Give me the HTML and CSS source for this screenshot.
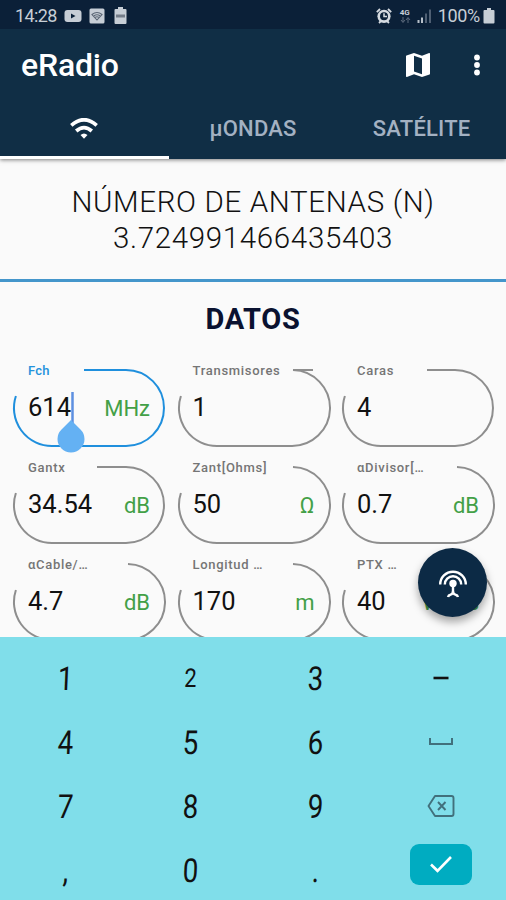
FILE: index.html
```
<!DOCTYPE html>
<html lang="es">
<head>
    <meta charset="UTF-8">
    <meta name="viewport" content="width=device-width, initial-scale=1.0">
    <title>eRadio</title>
    <link rel="stylesheet" href="styles.css">
</head>
<body>
    <div class="app">
        <header class="header">
            <div class="status">
                <span class="clock">14:28</span>
                <svg class="ico-video" width="18" height="14" viewBox="0 0 18 14"><rect x=".5" y="1" width="17" height="12" rx="3" fill="#c7ced6"/><path d="M7 4.5v5l4.5-2.5z" fill="#0b2038"/></svg>
                <svg class="ico-photo" width="16" height="16" viewBox="0 0 16 16"><rect x=".5" y=".5" width="15" height="15" rx="1.5" fill="#c7ced6"/><path d="M3 6.5q5-4 10 0L8 12zM5 7.8q3-2 6 0M6.3 9.3q1.7-1 3.4 0" fill="none" stroke="#5b6675" stroke-width="1.1"/></svg>
                <svg class="ico-batt" width="13" height="17" viewBox="0 0 13 17"><path d="M4 0h5v2h2.500q1 0 1 1v13q0 1-1 1h-10q-1 0-1-1V3q0-1 1-1H4z" fill="#c7ced6"/><path d="M2 7.500h9v3H2z" fill="#747d89"/></svg>
                <span class="spacer"></span>
                <svg class="ico-alarm" width="16" height="16" viewBox="0 0 16 16"><circle cx="8" cy="8.300" r="6.600" fill="#d5dae0"/><path d="M.8 4.200L4 1M15.200 4.200L12 1M3 15l2-2M13 15l-2-2" stroke="#d5dae0" stroke-width="1.800"/><circle cx="8" cy="8.300" r="4" fill="#0b2038"/><path d="M8 5.200v3.300h3" fill="none" stroke="#d5dae0" stroke-width="1.500"/></svg>
                <span class="network">4G<svg width="11" height="6" viewBox="0 0 11 6"><path d="M3 0v5M1 3l2 2.500L5 3M8 6V1M6 3l2-2.500L10 3" fill="none" stroke="#5c6a7c"/></svg></span>
                <svg class="ico-signal" width="15" height="14" viewBox="0 0 15 14"><path d="M1.500 14v-3M5 14V8.500" stroke="#b8c0ca" stroke-width="2"/><path d="M9 14V4.500M13 14V.5" stroke="#4f5f73" stroke-width="2"/></svg>
                <span class="percent">100%</span>
                <svg width="12" height="16" viewBox="0 0 12 16"><path d="M4 0h4v2h2.500q1 0 1 1v11.500q0 1-1 1h-9q-1 0-1-1V3q0-1 1-1H4z" fill="#c7ced6"/></svg>
            </div>
            <div class="toolbar">
                <h1>eRadio</h1>
                <svg class="ico-map" width="32" height="32" viewBox="0 0 24 24"><path fill="#fff" d="M20.500 3l-.160.030L15 5.100 9 3 3.360 4.900c-.210.070-.360.250-.360.480V20.500c0 .280.220.500.500.500l.160-.030L9 18.900l6 2.100 5.640-1.900c.210-.070.360-.250.360-.480V3.500c0-.280-.220-.500-.500-.500zM15 19l-6-2.110V5l6 2.110V19z"/></svg>
                <svg width="8" height="24" viewBox="0 0 8 24"><g fill="#fff"><circle cx="4" cy="4.500" r="2.900"/><circle cx="4" cy="12" r="2.900"/><circle cx="4" cy="19.500" r="2.900"/></g></svg>
            </div>
            <nav class="tabs">
                <div class="tab active">
                    <svg width="28" height="21" viewBox="0 0 28 21"><g fill="none" stroke="#fff" stroke-width="3.700"><path d="M1.300 7.300Q14-3.800 26.700 7.300"/><path d="M6.200 13q7.800-6.700 15.600 0"/></g><path d="M10.500 17q3.500-3.200 7 0L14 20.800z" fill="#fff"/></svg>
                </div>
                <div class="tab">µONDAS</div>
                <div class="tab">SATÉLITE</div>
            </nav>
        </header>

        <section class="result">
            <div class="result-title">NÚMERO DE ANTENAS (N)</div>
            <div class="result-value">3.724991466435403</div>
        </section>

        <main class="data">
            <h2>DATOS</h2>
            <div class="fields">
                <div class="field focused">
                    <svg class="outline" viewBox="0 0 152 78"><path d="M2.900 27A38 38 0 0 0 39 77H113A38 38 0 0 0 113 1H71"/></svg>
                    <label>Fch</label>
                    <div class="row"><span class="value">614</span><span class="unit">MHz</span></div>
                    <svg class="caret" width="28" height="62" viewBox="0 0 28 62"><path d="M15.500 0v32" stroke="#5d8fe0" stroke-width="2.500"/><path d="M14 28l9.500 9.500a13.500 13.500 0 1 1-19 0z" fill="#64b1f3"/></svg>
                </div>
                <div class="field">
                    <svg class="outline" viewBox="0 0 152 78"><path d="M2.900 27A38 38 0 0 0 39 77H113A38 38 0 0 0 115 1H135"/></svg>
                    <label>Transmisores</label>
                    <div class="row"><span class="value">1</span></div>
                </div>
                <div class="field">
                    <svg class="outline" viewBox="0 0 152 78"><path d="M2.900 27A38 38 0 0 0 39 77H113A38 38 0 0 0 113 1H85"/></svg>
                    <label>Caras</label>
                    <div class="row"><span class="value">4</span></div>
                </div>
                <div class="field">
                    <svg class="outline" viewBox="0 0 152 78"><path d="M2.900 27A38 38 0 0 0 39 77H113A38 38 0 0 0 113 1H84"/></svg>
                    <label>Gantx</label>
                    <div class="row"><span class="value">34.54</span><span class="unit">dB</span></div>
                </div>
                <div class="field">
                    <svg class="outline" viewBox="0 0 152 78"><path d="M2.900 27A38 38 0 0 0 39 77H113A38 38 0 0 0 115 1"/></svg>
                    <label>Zant[Ohms]</label>
                    <div class="row"><span class="value">50</span><span class="unit">Ω</span></div>
                </div>
                <div class="field">
                    <svg class="outline" viewBox="0 0 152 78"><path d="M2.900 27A38 38 0 0 0 39 77H113A38 38 0 0 0 115 1"/></svg>
                    <label>αDivisor[…</label>
                    <div class="row"><span class="value">0.7</span><span class="unit">dB</span></div>
                </div>
                <div class="field">
                    <svg class="outline" viewBox="0 0 152 78"><path d="M2.900 27A38 38 0 0 0 39 77H113A38 38 0 0 0 115 1"/></svg>
                    <label>αCable/…</label>
                    <div class="row"><span class="value">4.7</span><span class="unit">dB</span></div>
                </div>
                <div class="field">
                    <svg class="outline" viewBox="0 0 152 78"><path d="M2.900 27A38 38 0 0 0 39 77H113A38 38 0 0 0 115 1"/></svg>
                    <label>Longitud …</label>
                    <div class="row"><span class="value">170</span><span class="unit">m</span></div>
                </div>
                <div class="field">
                    <svg class="outline" viewBox="0 0 152 78"><path d="M2.900 27A38 38 0 0 0 39 77H113A38 38 0 0 0 115 1"/></svg>
                    <label>PTX …</label>
                    <div class="row"><span class="value">40</span><span class="unit">Watts</span></div>
                </div>
            </div>
            <div class="fab">
                <svg width="30" height="30" viewBox="0 0 30 30"><g fill="none" stroke="#fff" stroke-width="2.400"><path d="M2.200 16.500a12.800 12.800 0 0 1 25.600 0"/><path d="M6.800 16.500a8.200 8.200 0 0 1 16.400 0"/><path d="M15 15v8.500M10 29q.5-2 2.500-2.300 2.500-.7 2.500-4 0 3.300 2.500 4 2 .3 2.500 2.300"/></g><circle cx="15" cy="15.500" r="3.700" fill="#fff"/></svg>
            </div>
        </main>

        <footer class="keyboard">
            <div class="key digit">1</div>
            <div class="key digit small">2</div>
            <div class="key digit">3</div>
            <div class="key"><svg width="16" height="4" viewBox="0 0 16 4"><path d="M.5 2h15" stroke="#111" stroke-width="2.600"/></svg></div>
            <div class="key digit">4</div>
            <div class="key digit">5</div>
            <div class="key digit">6</div>
            <div class="key"><svg width="24" height="8" viewBox="0 0 24 8"><path d="M1 0v6h22V0" fill="none" stroke="#41707c" stroke-width="2"/></svg></div>
            <div class="key digit">7</div>
            <div class="key digit">8</div>
            <div class="key digit">9</div>
            <div class="key"><svg width="28" height="22" viewBox="0 0 28 22"><path d="M8 1h16.500q2 0 2 2v16q0 2-2 2H8L1.500 11zM11 7l7.500 8M18.500 7L11 15" fill="none" stroke="#41707c" stroke-width="1.900" stroke-linejoin="round"/></svg></div>
            <div class="key digit">,</div>
            <div class="key digit">0</div>
            <div class="key digit">.</div>
            <div class="key"><div class="enter"><svg width="24" height="18" viewBox="0 0 24 18"><path d="M2 9.500l6.500 6.300L22 2" fill="none" stroke="#fff" stroke-width="2.600"/></svg></div></div>
        </footer>
    </div>
</body>
</html>
```
FILE: styles.css
```
* {
    box-sizing: border-box;
}
body {
    margin: 0;
    font-family: Roboto, "Liberation Sans", sans-serif;
    background-color: #fafafa;
    color: #111;
}
svg {
    display: block;
    flex: none;
}
.app {
    width: 506px;
    height: 900px;
    display: flex;
    flex-direction: column;
    overflow: hidden;
}

/* header */
.header {
    position: relative;
    z-index: 2;
    height: 159px;
    flex: none;
    background-color: #102e45;
    box-shadow: 0 1px 4px rgba(0, 0, 0, 0.5);
}
.status {
    display: flex;
    align-items: center;
    height: 29px;
    padding: 2px 11px 0 15px;
    background-color: #0b2038;
    color: #c7ced6;
    font-size: 18px;
}
.clock {
    width: 49px;
    letter-spacing: -0.6px;
}
.ico-photo {
    margin-left: 7px;
}
.ico-batt {
    margin-left: 9px;
}
.spacer {
    flex: 1;
}
.network {
    width: 12px;
    margin-left: 8px;
    font-size: 8px;
    font-weight: bold;
    line-height: 9px;
}
.ico-signal {
    margin-left: 5px;
}
.percent {
    margin: 0 3px 0 6px;
    letter-spacing: -0.3px;
}
.toolbar {
    display: flex;
    align-items: center;
    height: 70px;
    padding: 1px 25px 0 21px;
}
.toolbar h1 {
    flex: 1;
    margin: 0;
    font-size: 32px;
    font-weight: 500;
    letter-spacing: -0.2px;
    color: #fff;
}
.ico-map {
    margin-right: 39px;
}
.tabs {
    display: grid;
    grid-template-columns: repeat(3, 1fr);
    height: 60px;
}
.tab {
    display: flex;
    align-items: center;
    justify-content: center;
    padding-top: 1px;
    font-size: 22px;
    font-weight: 500;
    letter-spacing: 0.2px;
    color: #a3b1c2;
    border-bottom: 3px solid transparent;
}
.tab.active {
    border-bottom-color: #fff;
}

/* result */
.result {
    flex: none;
    height: 123px;
    padding-top: 25px;
    border-bottom: 3px solid #4496cb;
    text-align: center;
    font-size: 29.5px;
    font-weight: 300;
    letter-spacing: 0.65px;
    line-height: 36px;
}

/* data fields */
.data {
    position: relative;
    flex: none;
    height: 355px;
    overflow: hidden;
}
.data h2 {
    margin: 0;
    height: 87px;
    padding-top: 19px;
    text-align: center;
    font-size: 29px;
    line-height: 36px;
    font-weight: 700;
    letter-spacing: 0.7px;
    color: #0a1230;
}
.fields {
    display: grid;
    grid-template-columns: repeat(3, 152px);
    column-gap: 12.5px;
    row-gap: 19px;
    padding-left: 13px;
}
.field {
    position: relative;
    height: 78px;
    padding: 0 15px 0 15px;
}
.outline {
    position: absolute;
    left: 0;
    top: 0;
    width: 152px;
    height: 78px;
    fill: none;
    stroke: #8e8e8e;
    stroke-width: 2;
    overflow: visible;
}
.field label {
    display: block;
    height: 20px;
    margin-top: -6px;
    font-size: 13px;
    line-height: 16px;
    font-weight: 500;
    letter-spacing: 0.7px;
    color: #757575;
    white-space: nowrap;
}
.row {
    display: flex;
    justify-content: space-between;
    align-items: baseline;
    line-height: 48px;
}
.value {
    font-size: 25.5px;
}
.unit {
    font-size: 22px;
    color: #43a047;
}
.focused .outline {
    stroke: #1f8fdd;
}
.focused label {
    color: #2492dc;
    letter-spacing: 0.2px;
}
.caret {
    position: absolute;
    left: 43.5px;
    top: 23px;
}
.fab {
    position: absolute;
    left: 418px;
    top: 266px;
    width: 69px;
    height: 69px;
    border-radius: 50%;
    background-color: #0c2a45;
    box-shadow: 0 5px 9px rgba(0, 0, 0, 0.35);
    display: flex;
    align-items: center;
    justify-content: center;
}

/* keyboard */
.keyboard {
    flex: 1;
    display: grid;
    grid-template-columns: repeat(4, 125.3px);
    grid-auto-rows: 64px;
    padding: 9px 0 0 2.5px;
    background-color: #80deea;
}
.key {
    display: flex;
    align-items: center;
    justify-content: center;
}
/* narrow, slightly slanted digits */
.digit {
    font-size: 33px;
    transform: scaleX(0.84) skewX(-3deg);
}
.digit.small {
    font-size: 26px;
}
.enter {
    display: flex;
    align-items: center;
    justify-content: center;
    width: 62px;
    height: 41px;
    margin-bottom: 12px;
    border-radius: 9px;
    background-color: #00acc1;
}
```
